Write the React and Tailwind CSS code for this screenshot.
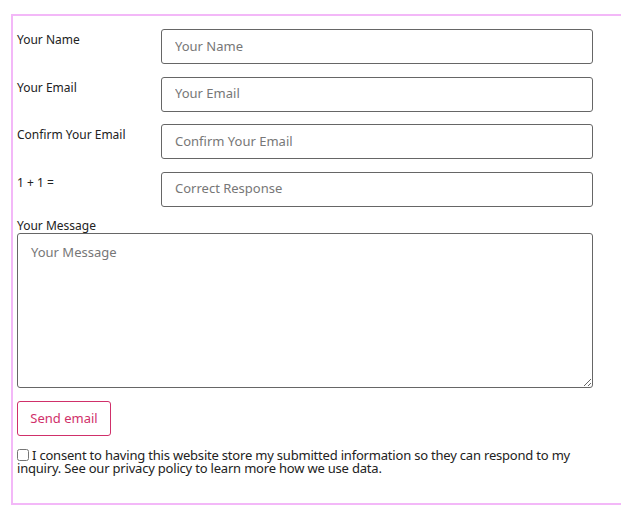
export default function App() {
  const f = { fontFamily: '"Noto Sans", "Open Sans", sans-serif' };
  const rows = [
    ["Your Name", "Your Name"],
    ["Your Email", "Your Email"],
    ["Confirm Your Email", "Confirm Your Email"],
    ["1 + 1 =", "Correct Response"],
  ];
  return (
    <div className="bg-white w-[621px] h-[514px] pt-[14px] pl-[11px]" style={f}>
      <div className="border-2 border-r-0 border-[#f3b8f8] h-[491px] pl-[4px] pr-[28px] pt-[13px] text-[12px] text-[#222]">
        {rows.map(([l, p]) => (
          <div key={l} className="flex h-[35px] mb-[12.5px]">
            <label className="w-[144px] pt-[2px]">{l}</label>
            <input className="flex-1 border border-[#666] rounded-[3px] px-[13px] text-[13px] placeholder-[#777] outline-none" placeholder={p} />
          </div>
        ))}
        <div className="mt-[4px] leading-[14px]">Your Message</div>
        <textarea className="block w-full h-[155px] border border-[#666] rounded-[3px] px-[13px] py-[9px] text-[13px] placeholder-[#777] outline-none" placeholder="Your Message" />
        <button className="mt-[13px] w-[94px] h-[35px] border border-[#d0306a] rounded-[3px] text-[#d0306a] text-[13px]">Send email</button>
        <p className="mt-[13px] text-[13px] leading-[13px] tracking-[-0.2px]">
          <input type="checkbox" className="align-[-1px] mr-[3px] w-[12px] h-[12px]" />
          I consent to having this website store my submitted information so they can respond to my inquiry. See our privacy policy to learn more how we use data.
        </p>
      </div>
    </div>
  );
}
